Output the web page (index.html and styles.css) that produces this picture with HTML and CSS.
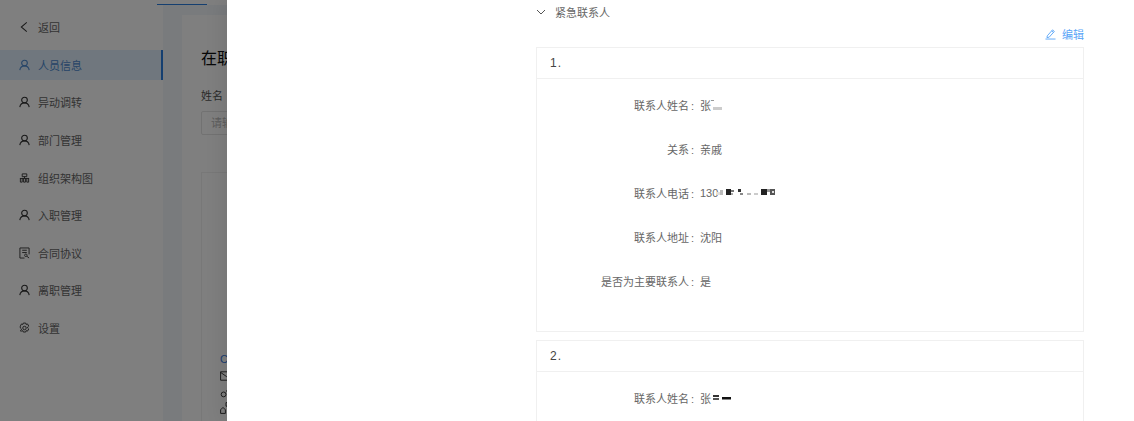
FILE: index.html
```html
<!DOCTYPE html>
<html>
<head>
    <title>紧急联系人</title>
    <link rel="stylesheet" href="styles.css">
</head>
<body>
    <svg class="defs" width="0" height="0">
        <symbol id="user" viewBox="0 0 12 12">
            <circle cx="6" cy="3.900" r="3.100" fill="none" stroke="currentColor" stroke-width="1.200"/>
            <path d="M.9 11.600c.4-2.900 2.400-4.600 5.100-4.600s4.700 1.700 5.100 4.600" fill="none" stroke="currentColor" stroke-width="1.200"/>
        </symbol>
    </svg>

    <div class="app">
        <div class="topbar"><span class="tab-line"></span></div>
        <div class="app-main">
            <div class="sidebar">
                <div class="menu-item back">
                    <svg class="icon" viewBox="0 0 12 12"><path d="M8.500 1 2.500 6l6 5" fill="none" stroke="currentColor" stroke-width="1.100"/></svg>
                    返回
                </div>
                <div class="menu-item active"><svg class="icon"><use href="#user"/></svg>人员信息</div>
                <div class="menu-item"><svg class="icon"><use href="#user"/></svg>异动调转</div>
                <div class="menu-item"><svg class="icon"><use href="#user"/></svg>部门管理</div>
                <div class="menu-item">
                    <svg class="icon" viewBox="0 0 12 12"><path d="M3.500 1.500h5v3h-5zM6 4.500v2M1 6.500h10M1.500 6.500v4h2v-4M5 6.500v4h2v-4M8.500 6.500v4h2v-4" fill="none" stroke="currentColor" stroke-width="1"/></svg>
                    组织架构图
                </div>
                <div class="menu-item"><svg class="icon"><use href="#user"/></svg>入职管理</div>
                <div class="menu-item">
                    <svg class="icon" viewBox="0 0 12 12"><path d="M6 11.500H1V.5h10v7M3.500 3h5M3.500 5.500h5" fill="none" stroke="currentColor" stroke-width="1"/><circle cx="7.500" cy="8.500" r="1.400" fill="none" stroke="currentColor" stroke-width=".9"/><path d="m8.500 9.500 2.500 2" stroke="currentColor" stroke-width="1"/></svg>
                    合同协议
                </div>
                <div class="menu-item"><svg class="icon"><use href="#user"/></svg>离职管理</div>
                <div class="menu-item">
                    <svg class="icon" viewBox="0 0 12 12"><path d="M4.700.6h2.600l.4 1.500 1.600-.5 1.300 2.300-1.200 1.100v1l1.200 1.100-1.300 2.300-1.600-.5-.4 1.500H4.700l-.4-1.500-1.600.5L1.400 9.100l1.200-1.100V7L1.400 5.900 1.400 4 2.700 1.600l1.600.5z" fill="none" stroke="currentColor" stroke-width="1"/><circle cx="6" cy="6" r="1.900" fill="none" stroke="currentColor" stroke-width="1"/></svg>
                    设置
                </div>
            </div>
            <div class="content">
                <div class="panel">
                    <div class="panel-title">在职</div>
                    <div class="field-label">姓名</div>
                    <div class="field-input">请输入</div>
                    <div class="profile-card">
                        <div class="profile-foot">
                            <span class="profile-c">C</span>
                            <svg class="mini" viewBox="0 0 10 10"><path d="M.5 1.500h11v7H.5zM.5 2l5 3.500 6-3.500" fill="none" stroke="currentColor" stroke-width=".8"/></svg>
                            <svg class="mini" viewBox="0 0 10 10"><circle cx="3" cy="7" r="2" fill="none" stroke="currentColor" stroke-width=".8"/><path d="M5 4.500 8 2" stroke="currentColor" stroke-width=".8"/></svg>
                            <svg class="mini" viewBox="0 0 10 10"><path d="M5 .5h4v3H5zM.5 9.500v-3l2-2 2 2v3z" fill="none" stroke="currentColor" stroke-width=".8"/></svg>
                        </div>
                    </div>
                </div>
            </div>
        </div>
    </div>

    <div class="drawer">
        <div class="section-head">
            <svg class="chevron" viewBox="0 0 10 10"><path d="m1 3 4 4 4-4" fill="none" stroke="currentColor"/></svg>
            紧急联系人
        </div>
        <div class="edit-row">
            <svg class="edit-icon" viewBox="0 0 12 12"><path d="M2.500 8 8.200 1.500l2 1.700-5.700 6.300-2.400.4zM7.300 2.600l2 1.700M.5 11.500h11" fill="none" stroke="currentColor"/></svg>
            编辑
        </div>

        <div class="contact-card">
            <div class="contact-head">1.</div>
            <div class="contact-body first">
                <div class="row">
                    <span class="label">联系人姓名</span>
                    <span class="value">张<svg class="mosaic name-a" viewBox="0 0 12 12"><rect x="0" y="1" width="3" height="1" fill="#999"/><rect x="2" y="8" width="9" height="3" fill="#ccc"/></svg></span>
                </div>
                <div class="row"><span class="label">关系</span><span class="value">亲戚</span></div>
                <div class="row">
                    <span class="label">联系人电话</span>
                    <span class="value">130<svg class="mosaic phone" viewBox="0 0 60 12">
                        <rect x="0" y="5" width="3" height="3" fill="#ddd"/><rect x="3" y="3" width="3" height="5" fill="#bbb"/>
                        <rect x="9" y="2" width="5" height="6" fill="#222"/><rect x="14" y="3" width="3" height="2" fill="#777"/><rect x="14" y="6" width="2" height="2" fill="#aaa"/>
                        <rect x="21" y="2" width="3" height="3" fill="#333"/><rect x="23" y="6" width="3" height="2" fill="#888"/>
                        <rect x="30" y="6" width="4" height="2" fill="#bbb"/><rect x="37" y="6" width="4" height="2" fill="#ccc"/>
                        <rect x="44" y="2" width="6" height="6" fill="#222"/><rect x="50" y="2" width="3" height="3" fill="#999"/><rect x="53" y="2" width="5" height="6" fill="#555"/><rect x="55" y="4" width="2" height="2" fill="#ddd"/>
                    </svg></span>
                </div>
                <div class="row"><span class="label">联系人地址</span><span class="value">沈阳</span></div>
                <div class="row"><span class="label">是否为主要联系人</span><span class="value">是</span></div>
            </div>
        </div>

        <div class="contact-card">
            <div class="contact-head">2.</div>
            <div class="contact-body second">
                <div class="row">
                    <span class="label">联系人姓名</span>
                    <span class="value">张<svg class="mosaic name-b" viewBox="0 0 22 12"><rect x="2" y="3" width="6" height="2" fill="#333"/><rect x="2" y="6" width="6" height="2" fill="#555"/><rect x="11" y="5" width="9" height="2.500" fill="#111"/></svg></span>
                </div>
            </div>
        </div>
    </div>
</body>
</html>
```

FILE: styles.css
```css
html, body { margin: 0; height: 421px; overflow: hidden; }
body { display: flex; font-family: "Liberation Sans", "Noto Sans CJK SC", sans-serif; font-size: 11px; color: #666; background: #fff; }
.defs { position: absolute; }

/* page under the drawer, dimmed by the mask */
.app { position: relative; width: 227px; height: 421px; flex-shrink: 0; overflow: hidden; display: flex; flex-direction: column; }
.app::after { content: ""; position: absolute; inset: 0; background: rgba(0,0,0,0.5); }
.topbar { height: 5px; flex-shrink: 0; padding-left: 157px; background: #fff; }
.tab-line { display: block; width: 50px; height: 1px; margin-top: 4px; background: #2b7fe0; }
.app-main { flex: 1; display: flex; }

.sidebar { width: 163px; flex-shrink: 0; box-sizing: border-box; padding-top: 3px; background: #fff; }
.menu-item { height: 37.6px; display: flex; align-items: center; padding-left: 19px; gap: 8px; box-sizing: border-box; color: #666; }
.menu-item .icon { width: 11px; height: 12px; flex-shrink: 0; overflow: visible; color: #333; }
.menu-item.back { height: 38px; }
.menu-item.active { height: 30px; margin: 4px 0 3.600px; background: #e0effc; color: #4d8ad0; border-right: 2px solid #2b7fe0; }
.menu-item.active .icon { color: #4d8ad0; }

.content { flex: 1; background: #f3f6fa; padding: 10px 0 0 19px; min-width: 0; }
.panel { width: 300px; height: 410px; box-sizing: border-box; padding: 34px 0 0 19px; background: #fff; }
.panel-title { font-size: 16px; line-height: 20px; font-weight: normal; color: #111; }
.field-label { margin-top: 19px; line-height: 16px; font-size: 11px; color: #555; }
.field-input { width: 200px; height: 24px; margin-top: 7px; box-sizing: border-box; border: 1px solid #e4e4e4; border-radius: 2px; padding-left: 9px; line-height: 22px; color: #bbb; }
.profile-card { margin-top: 37px; height: 260px; border: 1px solid #f0f0f0; border-right: 0; padding: 180px 0 0 18px; }
.profile-foot { display: flex; flex-direction: column; color: #333; gap: 4px; }
.profile-c { height: 13px; line-height: 13px; font-size: 11px; color: #3a7be0; }
.mini { width: 12px; height: 12px; overflow: visible; }

/* drawer */
.drawer { flex: 1; min-width: 0; padding: 0 50px 0 309px; background: #fff; box-shadow: -6px 0 16px rgba(0,0,0,0.08); position: relative; }
.section-head { height: 23px; display: flex; align-items: center; color: #666; }
.chevron { width: 10px; height: 10px; margin-right: 9px; color: #555; }
.edit-row { height: 22px; margin-bottom: 2px; display: flex; align-items: center; justify-content: flex-end; gap: 6px; color: #5aa5f7; }
.edit-icon { width: 11px; height: 12px; }
.contact-card { border: 1px solid #f0f0f0; margin-bottom: 8px; }
.contact-head { height: 30px; line-height: 30px; padding-left: 13px; border-bottom: 1px solid #f0f0f0; font-size: 12px; letter-spacing: 1px; color: #444; }
.contact-body { padding: 4px 0 0; }
.contact-body.first { height: 248px; box-sizing: content-box; }
.contact-body.second { height: 248px; }
.row { height: 44px; display: flex; align-items: center; }
.label { width: 159px; text-align: right; color: #666; flex-shrink: 0; }
.label::after { content: ":"; margin: 0 2px 0 2px; }
.value { margin-left: 4px; color: #666; display: flex; align-items: center; }
.mosaic { height: 12px; display: block; }
.name-a { width: 12px; }
.name-b { width: 22px; }
.phone { width: 60px; margin-left: -1px; }
```
